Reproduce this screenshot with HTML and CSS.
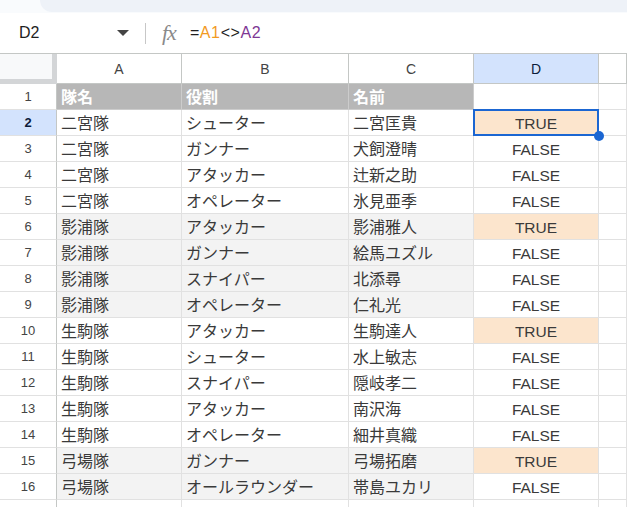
FILE: index.html
```html
<!DOCTYPE html>
<html lang="ja">
<head>
    <meta charset="UTF-8">
    <title>Sheet</title>
    <link rel="stylesheet" href="styles.css">
</head>
<body>

<div class="topbar"><div class="toolbar-edge"></div></div>

<div class="formula-bar">
    <div class="name-box">
        <span>D2</span>
        <span class="caret"></span>
    </div>
    <div class="divider"></div>
    <span class="fx">fx</span>
    <div class="formula">=<span class="ref-a">A1</span>&lt;&gt;<span class="ref-b">A2</span></div>
</div>

<div class="sheet">
    <!-- column headers -->
    <div class="corner"></div>
    <div class="col-head">A</div>
    <div class="col-head">B</div>
    <div class="col-head">C</div>
    <div class="col-head active">D</div>
    <div class="col-head"></div>

    <div class="row-head">1</div>
    <div class="cell title">隊名</div>
    <div class="cell title">役割</div>
    <div class="cell title">名前</div>
    <div class="cell"></div>
    <div class="cell"></div>

    <div class="row-head active">2</div>
    <div class="cell">二宮隊</div>
    <div class="cell">シューター</div>
    <div class="cell">二宮匡貴</div>
    <div class="cell bool match selected">TRUE</div>
    <div class="cell"></div>

    <div class="row-head">3</div>
    <div class="cell">二宮隊</div>
    <div class="cell">ガンナー</div>
    <div class="cell">犬飼澄晴</div>
    <div class="cell bool">FALSE</div>
    <div class="cell"></div>

    <div class="row-head">4</div>
    <div class="cell">二宮隊</div>
    <div class="cell">アタッカー</div>
    <div class="cell">辻新之助</div>
    <div class="cell bool">FALSE</div>
    <div class="cell"></div>

    <div class="row-head">5</div>
    <div class="cell">二宮隊</div>
    <div class="cell">オペレーター</div>
    <div class="cell">氷見亜季</div>
    <div class="cell bool">FALSE</div>
    <div class="cell"></div>

    <div class="row-head">6</div>
    <div class="cell band">影浦隊</div>
    <div class="cell band">アタッカー</div>
    <div class="cell band">影浦雅人</div>
    <div class="cell bool match">TRUE</div>
    <div class="cell"></div>

    <div class="row-head">7</div>
    <div class="cell band">影浦隊</div>
    <div class="cell band">ガンナー</div>
    <div class="cell band">絵馬ユズル</div>
    <div class="cell bool">FALSE</div>
    <div class="cell"></div>

    <div class="row-head">8</div>
    <div class="cell band">影浦隊</div>
    <div class="cell band">スナイパー</div>
    <div class="cell band">北添尋</div>
    <div class="cell bool">FALSE</div>
    <div class="cell"></div>

    <div class="row-head">9</div>
    <div class="cell band">影浦隊</div>
    <div class="cell band">オペレーター</div>
    <div class="cell band">仁礼光</div>
    <div class="cell bool">FALSE</div>
    <div class="cell"></div>

    <div class="row-head">10</div>
    <div class="cell">生駒隊</div>
    <div class="cell">アタッカー</div>
    <div class="cell">生駒達人</div>
    <div class="cell bool match">TRUE</div>
    <div class="cell"></div>

    <div class="row-head">11</div>
    <div class="cell">生駒隊</div>
    <div class="cell">シューター</div>
    <div class="cell">水上敏志</div>
    <div class="cell bool">FALSE</div>
    <div class="cell"></div>

    <div class="row-head">12</div>
    <div class="cell">生駒隊</div>
    <div class="cell">スナイパー</div>
    <div class="cell">隠岐孝二</div>
    <div class="cell bool">FALSE</div>
    <div class="cell"></div>

    <div class="row-head">13</div>
    <div class="cell">生駒隊</div>
    <div class="cell">アタッカー</div>
    <div class="cell">南沢海</div>
    <div class="cell bool">FALSE</div>
    <div class="cell"></div>

    <div class="row-head">14</div>
    <div class="cell">生駒隊</div>
    <div class="cell">オペレーター</div>
    <div class="cell">細井真織</div>
    <div class="cell bool">FALSE</div>
    <div class="cell"></div>

    <div class="row-head">15</div>
    <div class="cell band">弓場隊</div>
    <div class="cell band">ガンナー</div>
    <div class="cell band">弓場拓磨</div>
    <div class="cell bool match">TRUE</div>
    <div class="cell"></div>

    <div class="row-head">16</div>
    <div class="cell band">弓場隊</div>
    <div class="cell band">オールラウンダー</div>
    <div class="cell band">帯島ユカリ</div>
    <div class="cell bool">FALSE</div>
    <div class="cell"></div>

    <!-- only the top of this row is on screen -->
    <div class="row-head"></div>
    <div class="cell"></div>
    <div class="cell"></div>
    <div class="cell"></div>
    <div class="cell"></div>
    <div class="cell"></div>
</div>

</body>
</html>
```

FILE: styles.css
```css
body {
    margin: 0;
    font-family: "Liberation Sans", "Noto Sans CJK JP", sans-serif;
    color: #3a3a3a;
    background: #fff;
    overflow: hidden;
}

.topbar {
    height: 13px;
    background: #f9fbfd;
    padding-left: 40px;
}
.toolbar-edge {
    height: 12px;
    background: #eef2f8;
    border-bottom-left-radius: 12px;
}

.formula-bar {
    height: 40px;
    display: flex;
    align-items: center;
    border-bottom: 1px solid #c4c7c5;
}
.name-box {
    width: 110px;
    padding-left: 19px;
    display: flex;
    align-items: center;
    justify-content: space-between;
    font-size: 16px;
    color: #1f1f1f;
}
.caret {
    width: 0;
    height: 0;
    border-left: 6px solid transparent;
    border-right: 6px solid transparent;
    border-top: 6px solid #444;
}
.divider {
    width: 1px;
    height: 21px;
    background: #c7c7c7;
    margin-left: 16px;
}
.fx {
    font-family: "Liberation Serif", serif;
    font-style: italic;
    font-size: 22px;
    color: #8a8a8a;
    margin-left: 16px;
    letter-spacing: -1px;
}
.formula {
    margin-left: 14px;
    font-size: 16px;
    color: #1f1f1f;
    letter-spacing: 0.6px;
}
.ref-a { color: #f29a1f; }
.ref-b { color: #7e3794; }

.sheet {
    display: grid;
    grid-template-columns: 57px 125px 167px 125px 125px 1fr;
    grid-auto-rows: 26px;
    grid-template-rows: 30px;
}
.sheet > div {
    box-sizing: border-box;
    border-right: 1px solid #e1e1e1;
    border-bottom: 1px solid #e1e1e1;
}

.corner {
    background: #f8f9fa;
    border-right: 5px solid #d3d5d7 !important;
    border-bottom: 5px solid #d3d5d7 !important;
}
.col-head {
    display: flex;
    align-items: center;
    justify-content: center;
    font-size: 14px;
    color: #444;
    border-color: #c4c7c5 !important;
}
.col-head.active {
    background: #d3e3fd;
    color: #0b1b3a;
}
.row-head {
    display: flex;
    align-items: center;
    justify-content: center;
    font-size: 13px;
    color: #444;
    border-right-color: #c4c7c5 !important;
}
.row-head.active {
    background: #d3e3fd;
    color: #0b1b3a;
    font-weight: bold;
}

.cell {
    font-size: 16px;
    line-height: 25px;
    padding: 1px 4px 0;
    white-space: nowrap;
    overflow: hidden;
}
.cell.title {
    background: #b7b7b7;
    color: #fff;
    font-weight: bold;
    border-right-color: #cccccc;
    border-bottom-color: #cccccc;
}
.cell.band {
    background: #f3f3f3;
}
.cell.bool {
    text-align: center;
    font-size: 15.5px;
}
.cell.match {
    background: #fce5cd;
}
.cell.selected {
    position: relative;
    overflow: visible;
}
.cell.selected::after {
    content: "";
    position: absolute;
    left: -1px;
    top: -1px;
    right: -1px;
    bottom: -1px;
    border: 2px solid #1b66d2;
}
.cell.selected::before {
    content: "";
    position: absolute;
    right: -6px;
    bottom: -6px;
    width: 10px;
    height: 10px;
    border-radius: 50%;
    background: #1b66d2;
    z-index: 2;
}
```
